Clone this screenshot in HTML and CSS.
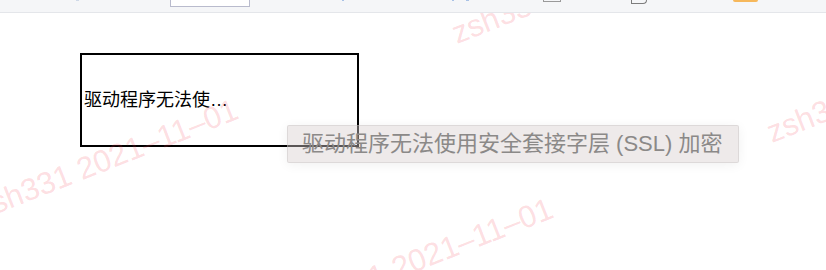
FILE: index.html
```html
<!DOCTYPE html>
<html lang="zh-CN">
<head>
<meta charset="utf-8">
<title>Tooltip</title>
<link rel="stylesheet" href="styles.css">
</head>
<body>
<div class="page">
  <div class="toolbar">
    <span class="tb-dot tb-dot-a"></span>
    <span class="tb-input"></span>
    <span class="tb-dot tb-dot-b"></span>
    <span class="tb-dot tb-dot-c"></span>
    <span class="tb-dot tb-dot-d"></span>
    <span class="tb-box"></span>
    <span class="tb-doc"></span>
    <span class="tb-orange"></span>
  </div>
  <main class="content">
    <div class="cell">
      <span class="cell-text">驱动程序无法使用安全套接字层 (SSL) 加密</span>
    </div>
  </main>
  <div class="watermarks" aria-hidden="true">
    <span class="wm wm-1">zsh331 2021–11–01</span>
    <span class="wm wm-2">zsh331 2021–11–01</span>
    <span class="wm wm-3">zsh331 2021–11–01</span>
    <span class="wm wm-4">zsh331 2021–11–01</span>
  </div>
  <div class="tooltip">驱动程序无法使用安全套接字层 (SSL) 加密</div>
</div>
</body>
</html>
```

FILE: styles.css
```css
html, body {
  margin: 0;
  padding: 0;
  background: #ffffff;
}

body {
  font-family: "Liberation Sans", "Noto Sans CJK SC", sans-serif;
  width: 826px;
  height: 270px;
  overflow: hidden;
}

.page {
  position: relative;
  width: 826px;
  height: 270px;
  overflow: hidden;
}

.toolbar {
  position: relative;
  z-index: 3;
  height: 12px;
  background: #f5f6f8;
  border-bottom: 1px solid #e4e6ea;
  display: flex;
  align-items: flex-start;
}

.tb-dot {
  display: block;
  height: 1px;
  background: #a9c2e6;
}
.tb-dot-a { width: 3px; margin-left: 76px; background: #cfd9e8; }
.tb-input {
  display: block;
  width: 78px;
  height: 6px;
  margin-left: 91px;
  background: #ffffff;
  border: 1px solid #b9bbcd;
  border-top: none;
}
.tb-dot-b { width: 2px; margin-left: 92px; }
.tb-dot-c { width: 2px; margin-left: 108px; }
.tb-dot-d { width: 3px; margin-left: 12px; }
.tb-box {
  display: block;
  width: 16px;
  height: 1px;
  margin-left: 74px;
  border: 1px solid #9a9a9a;
  border-top: none;
}
.tb-doc {
  display: block;
  width: 14px;
  height: 3px;
  margin-left: 70px;
  border: 1px solid #7d7d7d;
  border-top: none;
  border-bottom-right-radius: 4px;
}
.tb-orange {
  display: block;
  width: 25px;
  height: 2px;
  margin-left: 86px;
  background: #f6b85c;
  border-radius: 0 0 2px 2px;
}

.content {
  padding: 40px 0 0 80px;
}

.cell {
  width: 273px;
  height: 90px;
  border: 2px solid #000000;
  display: flex;
  align-items: center;
  padding-left: 2px;
  box-sizing: content-box;
  position: relative;
  z-index: 1;
}

.cell-text {
  display: block;
  width: 150px;
  font-size: 18px;
  line-height: 24px;
  color: #000000;
  white-space: nowrap;
  overflow: hidden;
  text-overflow: ellipsis;
}

.watermarks {
  position: absolute;
  inset: 0;
  z-index: 2;
  pointer-events: none;
}

.wm {
  position: absolute;
  font-family: "Liberation Sans", sans-serif;
  font-size: 31px;
  line-height: 31px;
  white-space: nowrap;
  color: rgba(245, 60, 80, 0.18);
  transform-origin: 0 26px;
  transform: rotate(-21.5deg);
}
.wm-1 { left: -19px; top: 194px; }
.wm-2 { left: 457px; top: 18px; }
.wm-3 { left: 296px; top: 293px; }
.wm-4 { left: 772px; top: 117px; }

.tooltip {
  position: absolute;
  z-index: 4;
  left: 287px;
  top: 125px;
  padding: 5px 16px 5px 14px;
  font-size: 22px;
  line-height: 26px;
  color: #8b8988;
  white-space: nowrap;
  background: rgba(214, 206, 204, 0.42);
  border: 1px solid rgba(190, 184, 182, 0.35);
  border-radius: 2px;
  box-shadow: 0 2px 12px rgba(0, 0, 0, 0.06);
}
```
